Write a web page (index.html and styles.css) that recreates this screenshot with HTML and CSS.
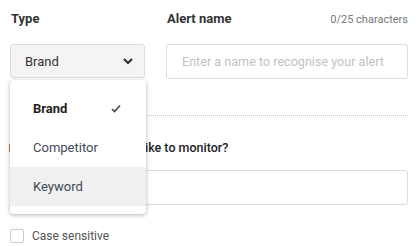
FILE: index.html
```html
<!DOCTYPE html>
<html lang="en">
<head>
    <meta charset="UTF-8">
    <meta name="viewport" content="width=device-width, initial-scale=1.0">
    <title>New alert</title>
    <link rel="stylesheet" href="styles.css">
</head>
<body>
    <div class="alertForm">
        <div class="topRow">
            <div class="field typeField">
                <div class="labelRow">
                    <label class="fieldLabel">Type</label>
                </div>
                <div class="selectBox">
                    <span>Brand</span>
                    <svg class="chevron" width="10" height="7" viewBox="0 0 10 7">
                        <polyline points="1,1 5,5 9,1" fill="none" stroke="#333" stroke-width="2.2"/>
                    </svg>
                </div>

                <!-- open dropdown menu -->
                <ul class="typeMenu">
                    <li class="menuItem selected">
                        <span>Brand</span>
                        <svg width="10" height="9" viewBox="0 0 10 9">
                            <polyline points="1,5 3.5,7.5 9,1.5" fill="none" stroke="#444" stroke-width="1.6"/>
                        </svg>
                    </li>
                    <li class="menuItem">Competitor</li>
                    <li class="menuItem hovered">Keyword</li>
                </ul>
            </div>

            <div class="field nameField">
                <div class="labelRow">
                    <label class="fieldLabel">Alert name</label>
                    <span class="counter">0/25 characters</span>
                </div>
                <input class="textInput" type="text" placeholder="Enter a name to recognise your alert">
            </div>
        </div>

        <div class="section">
            <h3 class="sectionTitle"><span class="stepDot"></span>What would you like to monitor?</h3>
            <input class="textInput" type="text">
            <label class="checkRow">
                <span class="checkBox"></span>
                Case sensitive
            </label>
        </div>
    </div>
</body>
</html>
```

FILE: styles.css
```css
body {
    margin: 0;
    background: #fff;
    font-family: Roboto, "Noto Sans", Arial, sans-serif;
    color: #333;
}
.alertForm {
    padding: 10px 9px 0 10px;
}
.topRow {
    display: grid;
    grid-template-columns: 135px 1fr;
    column-gap: 21px;
}
.field {
    display: flex;
    flex-direction: column;
}
.typeField {
    position: relative;
}
.labelRow {
    display: flex;
    justify-content: space-between;
    align-items: baseline;
    height: 18px;
    margin-bottom: 16px;
}
.fieldLabel {
    font-size: 13px;
    font-weight: bold;
    line-height: 18px;
    color: #333;
    padding-left: 1px;
}
.counter {
    font-size: 11px;
    color: #777;
}
.selectBox {
    height: 34px;
    box-sizing: border-box;
    border: 1px solid #dcdcdc;
    border-radius: 3px;
    background: #f4f4f4;
    display: flex;
    align-items: center;
    justify-content: space-between;
    padding: 0 11px 0 14px;
    font-size: 13px;
    color: #333;
}
.chevron {
    display: block;
}
.textInput {
    height: 35px;
    box-sizing: border-box;
    border: 1px solid #dcdcdc;
    border-radius: 3px;
    padding: 0 15px;
    font-family: inherit;
    font-size: 12.6px;
    color: #333;
    outline: none;
}
.textInput::placeholder {
    color: #c2c2c2;
}

/* Dropdown menu (open state) */
.typeMenu {
    position: absolute;
    top: 70px;
    left: 0;
    width: 136px;
    margin: 0;
    padding: 9px 0 8px;
    list-style: none;
    background: #fff;
    border-radius: 4px;
    box-shadow: 0 1px 4px rgba(0, 0, 0, 0.3);
    z-index: 2;
}
.menuItem {
    height: 39px;
    display: flex;
    align-items: center;
    justify-content: space-between;
    padding: 0 25px 0 23px;
    font-size: 13px;
    color: #3d4a57;
}
.menuItem.selected {
    font-weight: bold;
    color: #222;
}
.menuItem.hovered {
    background: #f0f0f0;
}

.section {
    margin-top: 36px;
    border-top: 1px dotted #c8c8c8;
    display: flex;
    flex-direction: column;
}
.sectionTitle {
    margin: 23px 0 13px;
    font-size: 12.5px;
    font-weight: 500;
    line-height: 18px;
    color: #222;
    display: flex;
    align-items: center;
}
.stepDot {
    flex: none;
    width: 18px;
    height: 8px;
    background: #d9822b;
    margin: 0 23px 0 -1px;
}
.checkRow {
    margin-top: 24px;
    display: flex;
    align-items: center;
    gap: 8px;
    font-size: 12px;
    color: #555;
}
.checkBox {
    width: 14px;
    height: 14px;
    box-sizing: border-box;
    border: 1px solid #ccc;
    border-radius: 2px;
}
```
